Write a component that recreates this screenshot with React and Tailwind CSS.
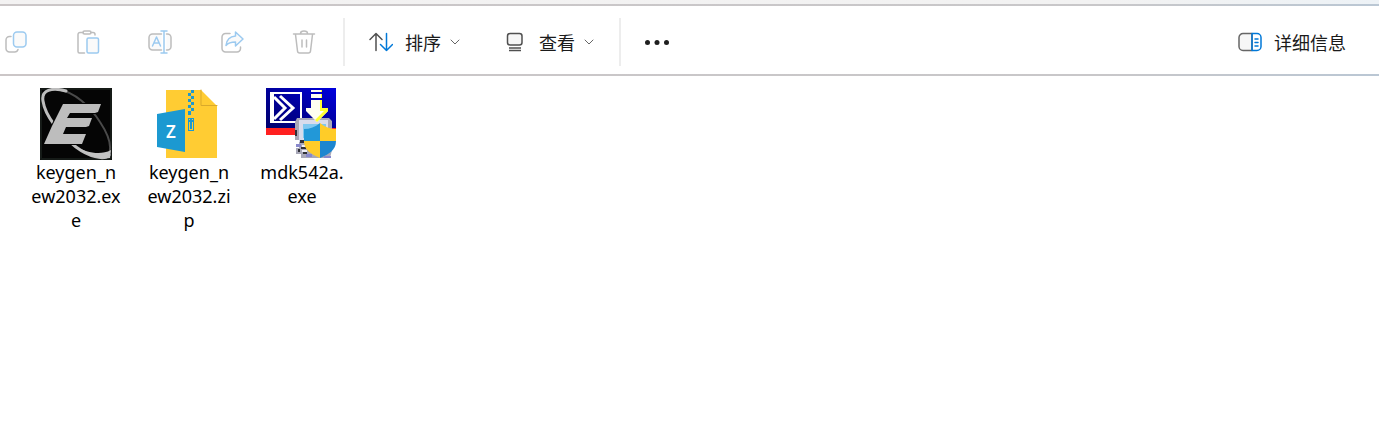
import React from "react";

const S = ({ children, w = 24, h = 24 }) => (
  <svg
    width={w}
    height={h}
    viewBox={`0 0 ${w} ${h}`}
    fill="none"
    strokeWidth="1.5"
    strokeLinecap="round"
    strokeLinejoin="round"
    aria-hidden="true"
    className="shrink-0"
  >
    {children}
  </svg>
);

const GREY = "#bdbdbd";
const PALE = "#9ccaf0";
const DARK = "#505050";
const BLUE = "#0078d8";

const CopyIcon = () => (
  <S>
    <path d="M7 6.5H5.5a3.5 3.5 0 0 0-3.5 3.5v8.5a3.5 3.5 0 0 0 3.5 3.5H10.5a3.5 3.5 0 0 0 3.5-2.5" stroke={GREY} />
    <rect x="9.5" y="2" width="12.5" height="15" rx="3.5" fill="#fafafa" stroke={PALE} />
  </S>
);

const PasteIcon = () => (
  <S>
    <path d="M7 2.5H4a2 2 0 0 0-2 2V21.5a1.5 1.5 0 0 0 1.5 1.5H8.5M15 2.5h2a2 2 0 0 1 2 2V5" stroke={GREY} />
    <rect x="7" y="1" width="8" height="3" rx="1.5" stroke={GREY} />
    <rect x="11" y="8" width="11.5" height="15" rx="1.5" fill="#fafafa" stroke={PALE} />
  </S>
);

const RenameIcon = () => (
  <S>
    <path d="M13.5 4H4.5A3.5 3.5 0 0 0 1 7.5v9A3.5 3.5 0 0 0 4.500 20h9M18.500 4h1A3.500 3.500 0 0 1 23 7.500v9a3.500 3.500 0 0 1-3.500 3.500h-1" stroke={GREY} fill="#fafafa" />
    <path d="M4.500 16 8.500 7l4 9M6 13h5M13 1h6M13 23h6M16 1v22" stroke={PALE} />
  </S>
);

const ShareIcon = () => (
  <S>
    <path d="M10 3.500H5.500A3.500 3.500 0 0 0 2 7v11.500A3.500 3.500 0 0 0 5.500 22h11.500a3.500 3.500 0 0 0 3.500-3.500V17" stroke={GREY} />
    <path d="M15.500 2 23 9l-7.500 7v-4c-4 0-7 .500-9.500 3.500C6.500 10 9.500 6.500 15.500 6Z" fill="#fafafa" stroke={PALE} />
  </S>
);

const TrashIcon = () => (
  <S>
    <path d="M1.500 4h21M8.500 3.500a3.500 2.500 0 0 1 7 0M3.500 4.500 5.500 21a2.200 2.200 0 0 0 2.200 2h8.600a2.200 2.200 0 0 0 2.200-2l2-16.500M10 10v7M14.500 10v7" stroke={GREY} />
  </S>
);

const SortIcon = () => (
  <S>
    <path d="M7 20.500V3.500M1 9.500l6-6 6 6" stroke={DARK} />
    <path d="M17.500 3.500v17M11.500 14.500l6 6 6-6" stroke={BLUE} />
  </S>
);

const ViewIcon = () => (
  <S>
    <rect x="4.500" y="3.500" width="14.500" height="11.500" rx="2.500" fill="#f6f6f6" stroke={DARK} />
    <path d="M6 18h12M6 20.500h12" stroke={DARK} strokeLinecap="butt" />
  </S>
);

const DetailsIcon = () => (
  <S>
    <path d="M14 3.500H5A4 4 0 0 0 1 7.500v9a4 4 0 0 0 4 4h9Z" fill="#f6f6f6" stroke="#666" />
    <path d="M14 3.500h5a4 4 0 0 1 4 4v9a4 4 0 0 1-4 4h-5Z" stroke={BLUE} />
    <path d="M17 9h3M17 12.500h3M17 16h3" stroke={BLUE} />
  </S>
);

const Chevron = () => (
  <S w={12} h={12}>
    <path d="M2 4 6 8 10 4" stroke="#666" strokeWidth="1" />
  </S>
);

const DotsIcon = () => (
  <S>
    <circle cx="2.500" cy="12.500" r="2.500" fill="#1f1f1f" />
    <circle cx="12" cy="12.500" r="2.500" fill="#1f1f1f" />
    <circle cx="21.500" cy="12.500" r="2.500" fill="#1f1f1f" />
  </S>
);

const KeygenIcon = () => (
  <S w={72} h={72}>
    <rect width="72" height="72" fill="#050505" />
    <rect x="1" y="1" width="70" height="70" stroke="#151a17" strokeWidth="2" />
    <path d="M20 2C34 4 50 18 60 34C68 46 72 58 69 66" stroke="#4a4a4a" strokeWidth="2" />
    <path d="M26 3C12-1 1 2 3 13C5 28 20 46 36 59C48 68 64 73 69 67" stroke="#bdbdbd" strokeWidth="3" />
    <path d="M36 59C46 67 58 72 70 70L71 62C60 68 46 64 36 59Z" fill="#c4c4c4" />
    <path d="M23 16H61L58 24L55 25H30L27 30H52L49 38L46 39H26L23 46H46L42 56H4L12 38Z" fill="#bdbdbd" stroke="#050505" strokeWidth="2" paintOrder="stroke" />
  </S>
);

const ZipIcon = () => (
  <S w={72} h={72}>
    <g transform="translate(4 2)">
      <path d="M9 0H44L60 16V68H9Z" fill="#ffcc33" />
      <path d="M44 0V15.500H60" stroke="#d9a92b" strokeWidth="1" />
      <path d="M34 0h3v3h-3zM31 3h3v3h-3zM34 6h3v3h-3zM31 9h3v3h-3zM34 12h3v3h-3zM31 15h3v3h-3zM34 18h3v3h-3zM31 21h3v4h-3z" fill="#1c99d1" />
      <path d="M31 28h6v13h-6z" fill="#1c99d1" />
      <path d="M32 29h1v1h-1zM35 29h1v1h-1zM32 32h1v7h-1zM35 32h1v7h-1zM32 39h4v1h-4z" fill="#ffcc33" />
      <path d="M0 24 28 19V62L0 57Z" fill="#1c99d1" />
      <text x="14" y="48" textAnchor="middle" fontFamily="Noto Sans, sans-serif" fontSize="17" fontWeight="600" fill="#fff">Z</text>
    </g>
  </S>
);

const MdkIcon = () => (
  <S w={72} h={72}>
    <defs>
      <linearGradient id="mdk-sky" x1="0" y1="1" x2="1" y2="0">
        <stop offset="0" stopColor="#00006c" />
        <stop offset="0.5" stopColor="#00009c" />
        <stop offset="1" stopColor="#0000e0" />
      </linearGradient>
    </defs>
    <rect width="70" height="40" fill="url(#mdk-sky)" />
    <rect y="40" width="70" height="7" fill="#ff2020" />
    <g strokeLinecap="butt" strokeLinejoin="miter" stroke="#fff" strokeWidth="2">
      <rect x="5" y="5" width="30" height="29" />
      <path d="M6 5V34" strokeWidth="4" />
      <path d="M8 9 19 20 8 31" strokeWidth="3" />
      <path d="M14 8 27 20 14 32" strokeWidth="3" />
    </g>
    <path d="M31 30H63L66 33V62L64 70H35V66H30V60H33V52H29V34Z" fill="#a8a8b8" />
    <path d="M33 32H62V54H33Z" fill="#d8dcec" />
    <path d="M37 36H60V50H37Z" fill="#80c8f0" />
    <path d="M34 52h4v3h-4zM35 59h5v2h-5zM37 64h4v2h-4zM32 61h2v3h-2zM29 42h2v6h-2z" fill="#303038" />
    <path d="M30 56h5v3h-5zM40 66h6v3h-6zM58 68h7v2h-7z" fill="#8888cc" />
    <path d="M36 57h4v2h-4zM36 62h5v2h-5z" fill="#f0f0f8" />
    <path d="M45 2H56V4H45ZM45 6H56V10H45ZM45 12H56V20H62V23L51 34 40 23V20H45Z" fill="#fffff0" />
    <path d="M55 2h1v2h-1zM55 6h1v4h-1zM54 12h2v8h6v3L51 34 49 32 58 23H54Z" fill="#ffff32" />
    <path d="M54 35C49 39 44 41 38 41V53H54Z" fill="#2298d8" />
    <path d="M54 35C59 39 64 41 70 41V53H54Z" fill="#ffcc28" />
    <path d="M38 53H54V70C45 66 38 62 38 53Z" fill="#ffcc28" />
    <path d="M54 53H70C70 62 63 66 54 70Z" fill="#1c86d0" />
  </S>
);

const tools = [
  ["复制", CopyIcon],
  ["粘贴", PasteIcon],
  ["重命名", RenameIcon],
  ["共享", ShareIcon],
  ["删除", TrashIcon],
];

const files = [
  { lines: ["keygen_n", "ew2032.ex", "e"], Icon: KeygenIcon },
  { lines: ["keygen_n", "ew2032.zi", "p"], Icon: ZipIcon },
  { lines: ["mdk542a.", "exe"], Icon: MdkIcon },
];

const Menu = ({ icon, label }) => (
  <button type="button" aria-haspopup="menu" className="flex items-center gap-3">
    {icon}
    <span className="flex items-center gap-2">
      {label}
      <Chevron />
    </span>
  </button>
);

export default function App() {
  return (
    <div className="min-h-screen bg-white font-['Noto_Sans','Noto_Sans_CJK_SC',sans-serif] text-lg leading-6 text-black">
      <div className="h-1 bg-linear-to-r from-[#f3f2f2] via-[#f2f2f2] via-80% to-[#edf2f6]" />
      <div className="bg-linear-to-r from-[#cbc6c7] via-[#c8c7c9] via-80% to-[#bac7d4] py-0.5">
        <header className="flex items-center justify-between bg-white pt-3 pr-[33px] pb-2 pl-1 font-['Noto_Sans_CJK_SC',sans-serif] text-[#1b1b1b]">
          <div role="toolbar" className="flex h-12 items-center">
            <div className="flex items-center gap-12">
              {tools.map(([name, Icon]) => (
                <button key={name} type="button" disabled aria-label={name}>
                  <Icon />
                </button>
              ))}
            </div>
            <div className="ml-[27px] h-full w-0.5 bg-[#ededed]" />
            <div className="ml-6 flex items-center gap-[42px]">
              <Menu icon={<SortIcon />} label="排序" />
              <Menu icon={<ViewIcon />} label="查看" />
            </div>
            <div className="ml-6 h-full w-0.5 bg-[#ededed]" />
            <button type="button" aria-label="更多" className="ml-6">
              <DotsIcon />
            </button>
          </div>
          <button type="button" className="flex items-center gap-3">
            <DetailsIcon />
            详细信息
          </button>
        </header>
      </div>
      <main className="flex flex-wrap gap-px px-5 pt-3">
        {files.map(({ lines, Icon }) => (
          <button key={lines.join("")} type="button" className="flex w-28 flex-col items-center">
            <Icon />
            <span>
              {lines.map((line) => (
                <span key={line} className="block">{line}</span>
              ))}
            </span>
          </button>
        ))}
      </main>
    </div>
  );
}
